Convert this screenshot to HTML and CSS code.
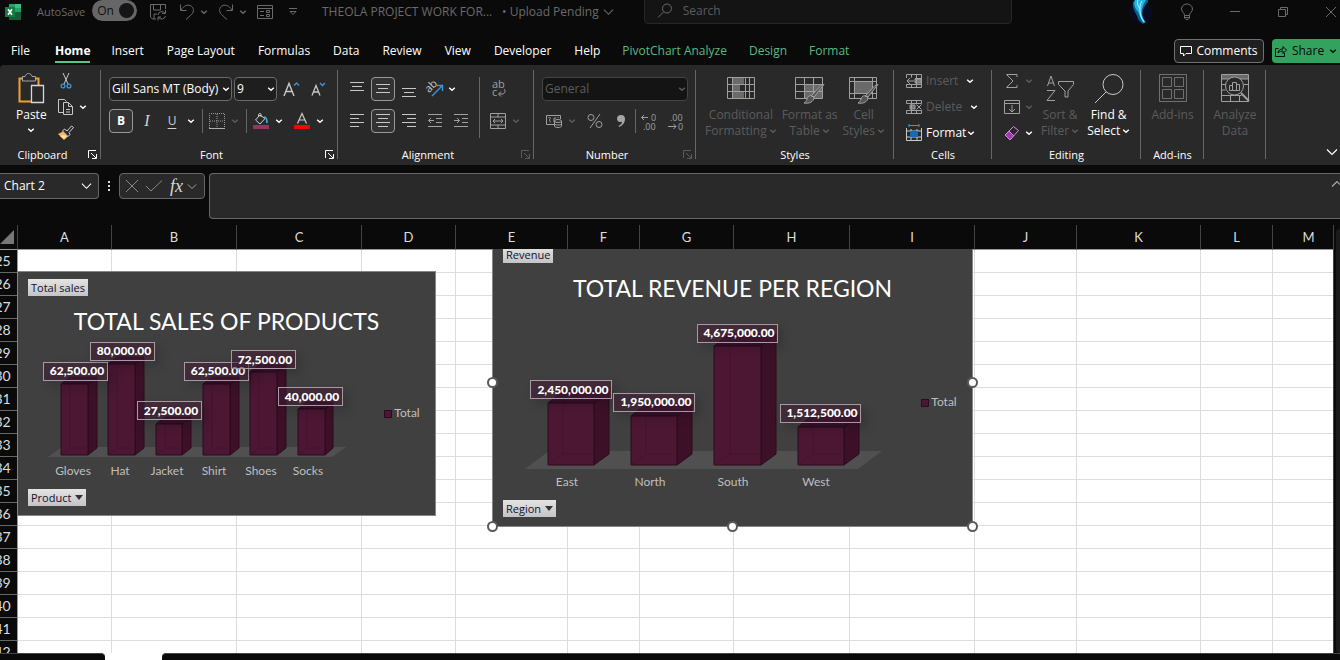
FILE: index.html
```
<!DOCTYPE html>
<html lang="en">
<head>
<meta charset="utf-8">
<title>THEOLA PROJECT WORK FOR... - Excel</title>
<link rel="stylesheet" href="styles.css">
</head>
<body>
<svg class="defs" aria-hidden="true">
  <symbol id="chev" viewBox="0 0 8 8"><path d="M1.2 2.8 4 5.2 6.8 2.8" fill="none" stroke="currentColor" stroke-width="1.5"/></symbol>
  <symbol id="chev-lg" viewBox="0 0 12 8"><path d="M1 1.5 6 6.5 11 1.5" fill="none" stroke="currentColor" stroke-width="1.2"/></symbol>
  <symbol id="launch" viewBox="0 0 9 9"><path d="M.5 8V.5H8M3 3l5 5M8.500 4v4.500H4" fill="none" stroke="currentColor"/></symbol>
</svg>

<header class="titlebar">
  <svg class="logo" viewBox="0 0 16 16" width="16" height="16"><path fill="#21a366" d="M4 0h12v8H4z"/><path fill="#33c481" d="M10 0h6v4h-6z"/><path fill="#107c41" d="M4 8h6v4H4z"/><path fill="#185c37" d="M4 11h12v5H4zM10 8h6v4h-6z"/><path fill="#107c41" d="M0 3h10v10H0z"/><path stroke="#fff" stroke-width="1.6" d="m3 5.300 4 5.400M7 5.300l-4 5.400"/></svg>
  <span class="autosave">AutoSave</span>
  <button class="toggle" role="switch" aria-checked="true">On<i></i></button>
  <button class="qa save" aria-label="Save"><svg viewBox="0 0 18 18" width="18" height="18"><path d="M16.500 6V1.500h-15V14l2 2H7M4.500 2v5h7V2M5 16v-5h3M9 12a4 4 0 0 1 7-2M16.500 7v3.500H13M16.500 13a4 4 0 0 1-7 1.500M9 17.500V14h3"/></svg></button>
  <button class="qa undo" aria-label="Undo"><svg viewBox="0 0 18 18" width="18" height="18"><path d="M2.500 1.500v6h6M3 7C6 2.500 9.500 1.500 12 2.500c4 1.500 4.500 6 1.500 9L8 16.500"/></svg></button>
  <svg class="c8"><use href="#chev"/></svg>
  <button class="qa redo" aria-label="Redo"><svg viewBox="0 0 18 18" width="18" height="18"><path d="M15.500 1.500v6h-6M15 7C12 2.500 8.500 1.500 6 2.500c-4 1.500-4.500 6-1.500 9l5.500 5"/></svg></button>
  <svg class="c8"><use href="#chev"/></svg>
  <button class="qa form" aria-label="Form"><svg viewBox="0 0 18 16" width="18" height="16"><path d="M1.500 1.500h15v13h-15zM1.500 4.500h15M4 7.500h4M4 11.500h4M10.500 6.500h3v2h-3zM10.500 10.500h3v2h-3z"/></svg></button>
  <button class="qa more" aria-label="Customize"><svg viewBox="0 0 8 8" width="8" height="8"><path d="M0 .5h8M1 3.500h6L4 6.500z"/></svg></button>
  <span class="doc">THEOLA PROJECT WORK FOR...</span>
  <button class="status">• Upload Pending <svg width="11" height="8"><use href="#chev-lg"/></svg></button>
  <label class="search"><svg viewBox="0 0 16 16" width="16" height="16"><circle cx="10" cy="5.500" r="4.500"/><path d="M6.500 9 1 14.500"/></svg><input type="text" placeholder="Search" aria-label="Search"></label>
  <div class="window">
    <svg class="avatar" viewBox="0 0 24 24" width="24" height="24"><circle cx="12" cy="12" r="11.500" fill="#080b22"/><path fill="#0b5f88" d="M4 2C3 7 6 12 8 16c1 4 3 6 6 8l3-2c-4-4-4-8-3-12 1-3 3-6 5-8V0H6z"/><path fill="#25b6e6" d="M6 0C4 4 6 8 9 12c2 3 2 7 6 11l1-1c-3-5-4-9-3-13 1-3 2-6 4-9z"/><path d="M9 0c-2 4 1 6 2 10 0 4 1 8 4 12M13 1c-2 3-2 5-2 8" stroke="#b5f2ff" fill="none"/></svg>
    <button aria-label="Tips"><svg viewBox="0 0 14 18" width="14" height="18"><path d="M4.500 12.500C4.500 9.500 1.500 9 1.500 6a5.500 5 0 0 1 11 0c0 3-3 3.500-3 6.500zM4.500 12.500V15l1.500 1.500h2L9.500 15v-2.500M5 14.500h4"/></svg></button>
    <button aria-label="Minimize"><svg viewBox="0 0 10 10" width="10" height="10"><path d="M0 4.500h10"/></svg></button>
    <button aria-label="Restore"><svg viewBox="0 0 10 10" width="10" height="10"><path d="M.5 2.500h7v7h-7zM2.500 2V.5h7v7H8"/></svg></button>
    <button aria-label="Close"><svg viewBox="0 0 10 10" width="10" height="10"><path d="m0 0 10 10M10 0 0 10"/></svg></button>
  </div>
</header>

<nav class="tabs">
  <a href="#">File</a><a href="#" class="active">Home</a><a href="#">Insert</a><a href="#">Page Layout</a><a href="#">Formulas</a><a href="#">Data</a><a href="#">Review</a><a href="#">View</a><a href="#">Developer</a><a href="#">Help</a><a href="#" class="ctx">PivotChart Analyze</a><a href="#" class="ctx">Design</a><a href="#" class="ctx">Format</a>
  <div class="tab-actions">
    <button class="comments"><svg viewBox="0 0 12 12" width="12" height="12"><path d="M.5 1.500h11v7H6L3.500 11V8.500h-3z" fill="none" stroke="currentColor"/></svg>Comments</button>
    <button class="share"><svg viewBox="0 0 12 12" width="12" height="12"><path d="M3.500 3.500h-3v8h9V8M3 8c.5-3 2-4 5-4V1.500L11.500 5 8 8.500V6C6 6 4.500 6.500 3 8z" fill="none" stroke="currentColor"/></svg>Share<svg class="c8"><use href="#chev"/></svg></button>
  </div>
</nav>

<main class="ribbon">
  <section class="group clipboard">
    <div class="body">
      <button class="big paste"><svg viewBox="0 0 28 32" width="28" height="32"><path d="M7 5.500H2.500v23H14M18 5.500h3.500V12" fill="none" style="stroke:#f0a030" stroke-width="2"/><path d="M5.500 8V3.500H8c1-4 6-4 7 0h3.500V8z" fill="#292929" stroke="#a6a6a6"/><path d="M14.500 12.500h12v17h-12z" style="fill:#292929;stroke:#d8d8d8" stroke-width="1.300"/></svg><span>Paste</span><svg class="c8"><use href="#chev"/></svg></button>
      <div class="stack">
        <button aria-label="Cut"><svg viewBox="0 0 12 16" width="12" height="16"><path d="M3 0l5 11M9 0 4 11" stroke="#c8c8c8" fill="none"/><g fill="none" stroke="#3a96dd" stroke-width="1.300"><circle cx="3" cy="13" r="1.900"/><circle cx="9" cy="13" r="1.900"/></g></svg></button><i></i>
        <button aria-label="Copy"><svg viewBox="0 0 18 16" width="18" height="16"><path d="M6 13.500H1.500V.5h6l2 2M6.500 3.500h5l4 4v8h-9zM11.500 4v3.500h4M9 10.500h4M9 13h4" fill="none" stroke="#c8c8c8"/></svg></button><svg class="c8"><use href="#chev"/></svg>
        <button aria-label="Format Painter"><svg viewBox="0 0 16 16" width="16" height="16"><path d="M5 6.500 0 9l6 6 4.500-4z" style="fill:#f4b860;stroke:none"/><path d="m2 11 4 3 3-3-4-1z" style="fill:#ffe0a0;stroke:none"/><path d="m4.500 6 2-2 2.500 2L13.500 1l2 1.500L11 7.500l1 2-2 2z" fill="#292929" stroke="#d0d0d0"/></svg></button>
      </div>
    </div>
    <footer>Clipboard<svg class="launch"><use href="#launch"/></svg></footer>
  </section>

  <section class="group font">
    <div class="body col">
      <div class="row fr1">
        <label class="pick"><select aria-label="Font"><option>Gill Sans MT (Body)</option></select><svg class="c8"><use href="#chev"/></svg></label>
        <label class="pick"><select aria-label="Font size"><option>9</option></select><svg class="c8"><use href="#chev"/></svg></label>
        <button aria-label="Increase font size"><svg viewBox="0 0 16 16" width="16" height="16"><path d="m1 15 5-12.500L11 15M2.800 10.500h6.400" stroke="#c8c8c8" stroke-width="1.400" fill="none"/><path d="M11 4.500 13.500 2 16 4.500" fill="none" stroke-width="1.300" style="stroke:#3a96dd"/></svg></button>
        <button aria-label="Decrease font size"><svg viewBox="0 0 16 16" width="16" height="16"><path d="m2 14.500 4-10 4 10M3.500 11h5" stroke="#c8c8c8" stroke-width="1.300" fill="none"/><path d="M10 2 12.500 4.500 15 2" fill="none" stroke-width="1.300" style="stroke:#3a96dd"/></svg></button>
      </div>
      <div class="row fr2">
        <button class="on"><b>B</b></button><button class="it">I</button><button class="un">U</button><svg class="c8"><use href="#chev"/></svg><hr>
        <button aria-label="Borders"><svg viewBox="0 0 16 16" width="16" height="16"><path d="M.5 15V.5h15V15M8 1v14M1 8h14" fill="none" stroke="#999" stroke-dasharray="1 1"/><path d="M0 15.500h16" stroke="#b0b0b0"/></svg></button><svg class="c8 off"><use href="#chev"/></svg><hr>
        <button aria-label="Fill colour"><svg viewBox="0 0 16 16" width="16" height="16"><path style="fill:#993366;stroke:none" d="M0 12h16v4H0z"/><path d="M7 2 2.500 7l4.500 4 5-5.500zM5.500 4V1.500C6 .2 8 .2 8 1.500V4" fill="none" stroke="#d0d0d0"/><path d="M11 4c2.500 0 3 2 3 6" stroke="#5aa6dd" stroke-width="1.600" fill="none"/></svg></button><svg class="c8"><use href="#chev"/></svg>
        <button aria-label="Font colour"><svg viewBox="0 0 16 16" width="16" height="16"><path style="fill:#f00;stroke:none" d="M0 12h16v4H0z"/><path d="m3.500 10.500 4.500-10 4.500 10M5 7h6" stroke="#c8c8c8" stroke-width="1.200" fill="none"/></svg></button><svg class="c8"><use href="#chev"/></svg>
      </div>
    </div>
    <footer>Font<svg class="launch"><use href="#launch"/></svg></footer>
  </section>

  <section class="group align">
    <div class="body">
      <div class="ag">
        <button aria-label="Top align"><svg viewBox="0 0 14 14" width="14" height="14"><path d="M0 .5h14M2 4.500h10M0 8.500h14"/></svg></button>
        <button class="on" aria-label="Middle align"><svg viewBox="0 0 14 14" width="14" height="14"><path d="M0 2.500h14M2 6.500h10M0 10.500h14"/></svg></button>
        <button aria-label="Bottom align"><svg viewBox="0 0 14 14" width="14" height="14"><path d="M0 6.500h14M2 10.500h10M0 14.500h14"/></svg></button>
        <button aria-label="Orientation"><svg viewBox="0 0 16 16" width="16" height="16"><text x="-2" y="9" transform="rotate(-45 4 6)" class="ab">ab</text><path d="M5 15 15 5M10 4.500h5.500V10" style="stroke:#3a96dd;stroke-width:1.400"/></svg></button>
        <svg class="c8 tight"><use href="#chev"/></svg>
        <button aria-label="Align left"><svg viewBox="0 0 14 14" width="14" height="14"><path d="M0 .5h14M0 4.500h9M0 8.500h14M0 12.500h9"/></svg></button>
        <button class="on" aria-label="Center"><svg viewBox="0 0 14 14" width="14" height="14"><path d="M0 .5h14M2 4.500h10M0 8.500h14M2 12.500h10"/></svg></button>
        <button aria-label="Align right"><svg viewBox="0 0 14 14" width="14" height="14"><path d="M0 .5h14M5 4.500h9M0 8.500h14M5 12.500h9"/></svg></button>
        <button class="dim" aria-label="Decrease indent"><svg viewBox="0 0 14 14" width="14" height="14"><path d="M0 .5h14M8 4.500h6M8 8.500h6M0 12.500h14M6 6.500H.5M3 4 .5 6.500 3 9"/></svg></button>
        <button class="dim" aria-label="Increase indent"><svg viewBox="0 0 14 14" width="14" height="14"><path d="M0 .5h14M8 4.500h6M8 8.500h6M0 12.500h14M0 6.500h5.500M3 4l2.500 2.500L3 9"/></svg></button>
      </div>
      <hr class="tall">
      <div class="ag2">
        <button class="dim" aria-label="Wrap text"><svg viewBox="0 0 16 18" width="16" height="18"><text x="2" y="8" class="ab">ab</text><text x="2" y="16" class="ab">c</text><path d="M14 9c2 2 1 5-2 5H9M11 11.500 8.500 14l2.500 2.500"/></svg></button><i></i>
        <button class="dim" aria-label="Merge"><svg viewBox="0 0 16 16" width="16" height="16"><path d="M.5 .5h15v15H.5zM.5 4h15M.5 12h15M8 0v4M8 12v4M3 8h10M5 6 3 8l2 2M11 6l2 2-2 2"/></svg></button><svg class="c8 off"><use href="#chev"/></svg>
      </div>
    </div>
    <footer>Alignment<svg class="launch off"><use href="#launch"/></svg></footer>
  </section>

  <section class="group number">
    <div class="body col">
      <label class="pick disabled"><select aria-label="Number format" disabled><option>General</option></select><svg class="c8"><use href="#chev"/></svg></label>
      <div class="row nr2 dim">
        <button aria-label="Accounting"><svg viewBox="0 0 16 14" width="16" height="14"><path d="M8 10.500H.5v-9h14V5M5 4C3 4 3 8 5 8M10 4H8v4M3 3v1M12 3v1"/><ellipse cx="12" cy="7" rx="3.500" ry="1.500"/><path d="M8.500 7v5c0 2 7 2 7 0V7M8.500 9.500c0 2 7 2 7 0"/></svg></button><svg class="c8 off"><use href="#chev"/></svg>
        <button aria-label="Percent"><svg viewBox="0 0 16 16" width="16" height="16"><circle cx="4" cy="4.500" r="3"/><circle cx="12" cy="11.500" r="3"/><path d="M13 1 3 15"/></svg></button>
        <button aria-label="Comma"><svg viewBox="0 0 10 14" width="10" height="14"><path d="M5 1c3 0 4 2 4 4 0 4-3 7-6 8l-.5-1C5 11 6 9 6 7.500 3 9 1 7 1 4.500 1 2 3 1 5 1z" style="fill:#a6a6a6;stroke:none"/></svg></button><hr>
        <button aria-label="Increase decimal"><svg viewBox="0 0 16 17" width="16" height="17"><path d="M7 4.500H.5M3 2 .5 4.500 3 7"/><text x="10" y="8" class="dec">0</text><text x="2" y="17" class="dec">.00</text></svg></button>
        <button aria-label="Decrease decimal"><svg viewBox="0 0 16 17" width="16" height="17"><text x="2" y="8" class="dec">.00</text><text x="10" y="17" class="dec">0</text><path d="M0 13.500h8M5.500 11 8 13.500 5.500 16"/></svg></button>
      </div>
    </div>
    <footer>Number<svg class="launch off"><use href="#launch"/></svg></footer>
  </section>

  <section class="group styles">
    <div class="body dim">
      <button class="big"><svg viewBox="0 0 30 32" width="30" height="32"><path d="M6 4h12v7h-4v7h4v7H6z" style="fill:#6a6a6a;stroke:none"/><path d="M1.500 4.500h27v21h-27zM1.500 11.500h27M1.500 18.500h27M6.500 4v22M19.500 4v22M23.500 4v22"/></svg><span>Conditional<br>Formatting<svg class="c8"><use href="#chev"/></svg></span></button>
      <button class="big"><svg viewBox="0 0 30 32" width="30" height="32"><path d="M10 11h17v14H10z" style="fill:#6a6a6a;stroke:none"/><path d="M.5 4.500h27v21H.5zM0 11.500h28M0 18.500h28M9.500 4v22M18.500 4v22"/><path d="M29 11.500 19 24l-3-1L26 12.500zM19 24c0 5-5 7-10 6 2-1 2-2 3-4 1-3 3-4 5-3z" style="fill:#555"/></svg><span>Format as<br>Table<svg class="c8"><use href="#chev"/></svg></span></button>
      <button class="big"><svg viewBox="0 0 30 32" width="30" height="32"><path d="M6 9h17v11H6z" style="fill:#6a6a6a;stroke:none"/><path d="M.5 4.500h27v21H.5zM0 8.500h28M0 20.500h28M5.500 4v22M23.500 4v22"/><path d="M29 11.500 19 24l-3-1L26 12.500zM19 24c0 5-5 7-10 6 2-1 2-2 3-4 1-3 3-4 5-3z" style="fill:#555"/></svg><span>Cell<br>Styles<svg class="c8"><use href="#chev"/></svg></span></button>
    </div>
    <footer>Styles</footer>
  </section>

  <section class="group cells">
    <div class="body list">
      <button class="dim"><svg viewBox="0 0 16 16" width="16" height="16"><path d="M9 6h6v4H9z" style="fill:#777"/><path d="M.5 5V1.500h15v13H.5V11M5.500 1.500v3M10.500 1v14M.5 11.500h15M5.500 11v3M8 8H1M4 5 1 8l3 3M9 5.500h6"/></svg><span>Insert</span><svg class="c8 lit"><use href="#chev"/></svg></button>
      <button class="dim"><svg viewBox="0 0 16 16" width="16" height="16"><path d="M4 6h5v4H4z" style="fill:#777"/><path d="M.5 4.500v-3h15v3H.5M.5 14.500v-3h15v3zM5.500 1.500v13M10.500 1.500v3M10.500 11.500v3M10.500 5.500l5 5M15.500 5.500l-5 5"/></svg><span>Delete</span><svg class="c8 lit"><use href="#chev"/></svg></button>
      <button class="fmt"><svg viewBox="0 0 16 16" width="16" height="16"><path d="M.5 3v12.500h15V3M.5 6h15M.5 12h15M5 4v11.500M11 4v11.500" style="stroke:#c8c8c8"/><path d="M4 6h8v6H4z" style="fill:#0f6cbd;stroke:none"/><path d="M3 .5h10M3-1v3M13-1v3" style="stroke:#3a96dd"/></svg><span>Format</span><svg class="c8 lit"><use href="#chev"/></svg></button>
    </div>
    <footer>Cells</footer>
  </section>

  <section class="group editing">
    <div class="body">
      <div class="list small">
        <button class="dim" aria-label="Sum"><svg viewBox="0 0 16 16" width="16" height="16"><path d="M13 4V1.500H2.500L9 8l-6.500 6.500H13V12"/></svg><svg class="c8 off"><use href="#chev"/></svg></button>
        <button class="dim" aria-label="Fill"><svg viewBox="0 0 16 14" width="16" height="14"><path d="M.5 .5h15v13H.5zM.5 3.500h15M8 5v7M5 9l3 3 3-3"/></svg><svg class="c8 off"><use href="#chev"/></svg></button>
        <button aria-label="Clear"><svg viewBox="0 0 16 16" width="16" height="16"><path d="m1 10 4-4 5 5-4 4z" style="fill:#a03cb0;stroke:none"/><path d="m1 10 8.500-8.500 5 4L6 15zM5 6l5 5" style="stroke:#d68ae0"/></svg><svg class="c8"><use href="#chev"/></svg></button>
      </div>
      <button class="big dim"><svg viewBox="0 0 30 32" width="30" height="32"><path d="M2.500 13 6 3l3.500 10M3.500 10h5M2 17.500h8L2 27.500h8M13.500 8.500h15v3L23 18v6h-3v-6l-6.500-6.500z"/></svg><span>Sort &amp;<br>Filter<svg class="c8"><use href="#chev"/></svg></span></button>
      <button class="big"><svg viewBox="0 0 30 32" width="30" height="32"><circle cx="19" cy="11.500" r="10"/><path d="M12 19 1 30"/></svg><span>Find &amp;<br>Select<svg class="c8"><use href="#chev"/></svg></span></button>
    </div>
    <footer>Editing</footer>
  </section>

  <section class="group addins">
    <div class="body dim faint"><button class="big"><svg viewBox="0 0 30 32" width="30" height="32"><path d="M1.500 1.500h27v27h-27zM4.500 4.500h9v9h-9zM16.500 4.500h9v9h-9zM4.500 16.500h9v9h-9zM16.500 16.500h9v9h-9z"/></svg><span>Add-ins</span></button></div>
    <footer>Add-ins</footer>
  </section>

  <section class="group analyze">
    <div class="body dim"><button class="big"><svg viewBox="0 0 30 32" width="30" height="32"><path d="M2 2h27v4H2z" style="fill:#6a6a6a;stroke:none"/><path d="M1.500 1.500h27v27h-27zM1.500 6h27M1.500 11.500h5M24 11.500h4M1.500 17h4M1.500 22.500h20M10.500 22v6M19.500 22v6"/><circle cx="14.500" cy="13" r="9" style="fill:#292929"/><path d="m21 20 8 8" style="stroke-width:2"/><path d="M9.500 17.500v-5h3v5zM12.500 17.500v-8h4v8zM16.500 17.500v-6h3v6z"/></svg><span>Analyze<br>Data</span></button></div>
  </section>
  <button class="collapse" aria-label="Collapse ribbon"><svg width="12" height="8"><use href="#chev-lg"/></svg></button>
</main>

<section class="formula">
  <div class="namebox"><input type="text" value="Chart 2" aria-label="Name box"><svg width="11" height="8"><use href="#chev-lg"/></svg></div>
  <div class="dots"><i></i><i></i><i></i></div>
  <div class="fx">
    <button aria-label="Cancel"><svg viewBox="0 0 12 12" width="12" height="12"><path d="m0 0 12 12M12 0 0 12"/></svg></button>
    <button aria-label="Enter"><svg viewBox="0 0 16 12" width="16" height="12"><path d="m0 6 5 5L16 .5"/></svg></button>
    <button class="fn">fx</button><svg width="10" height="7"><use href="#chev-lg"/></svg>
  </div>
  <div class="bar"><input type="text" aria-label="Formula bar"><svg width="12" height="8"><use href="#chev-lg"/></svg></div>
</section>

<section class="sheet">
  <table>
    <colgroup><col class="w-h"><col class="w94"><col class="w125"><col class="w125"><col class="w94"><col class="w112"><col class="w72"><col class="w94"><col class="w116"><col class="w125"><col class="w102"><col class="w124"><col class="w72"><col class="w72"></colgroup>
    <thead><tr><th><svg viewBox="0 0 14 14" width="14" height="14"><path d="M14 0v14H0z" fill="#777"/></svg></th><th>A</th><th>B</th><th>C</th><th>D</th><th>E</th><th>F</th><th>G</th><th>H</th><th>I</th><th>J</th><th>K</th><th>L</th><th>M</th></tr></thead>
    <tbody>
      <tr><th>25</th><td><td><td><td><td><td><td><td><td><td><td><td><td></tr>
      <tr><th>26</th><td><td><td><td><td><td><td><td><td><td><td><td><td></tr>
      <tr><th>27</th><td><td><td><td><td><td><td><td><td><td><td><td><td></tr>
      <tr><th>28</th><td><td><td><td><td><td><td><td><td><td><td><td><td></tr>
      <tr><th>29</th><td><td><td><td><td><td><td><td><td><td><td><td><td></tr>
      <tr><th>30</th><td><td><td><td><td><td><td><td><td><td><td><td><td></tr>
      <tr><th>31</th><td><td><td><td><td><td><td><td><td><td><td><td><td></tr>
      <tr><th>32</th><td><td><td><td><td><td><td><td><td><td><td><td><td></tr>
      <tr><th>33</th><td><td><td><td><td><td><td><td><td><td><td><td><td></tr>
      <tr><th>34</th><td><td><td><td><td><td><td><td><td><td><td><td><td></tr>
      <tr><th>35</th><td><td><td><td><td><td><td><td><td><td><td><td><td></tr>
      <tr><th>36</th><td><td><td><td><td><td><td><td><td><td><td><td><td></tr>
      <tr><th>37</th><td><td><td><td><td><td><td><td><td><td><td><td><td></tr>
      <tr><th>38</th><td><td><td><td><td><td><td><td><td><td><td><td><td></tr>
      <tr><th>39</th><td><td><td><td><td><td><td><td><td><td><td><td><td></tr>
      <tr><th>40</th><td><td><td><td><td><td><td><td><td><td><td><td><td></tr>
      <tr><th>41</th><td><td><td><td><td><td><td><td><td><td><td><td><td></tr>
      <tr><th>42</th><td><td><td><td><td><td><td><td><td><td><td><td><td></tr>
    </tbody>
  </table>
  <div class="vscroll"><i></i></div>

  <figure class="chart sales">
    <button class="field">Total sales</button>
    <h2>TOTAL SALES OF PRODUCTS</h2>
    <svg class="plot" viewBox="18 340 418 145" width="418" height="145">
      <path class="floor" d="M48 457h284l14-10H62z"/>
      <g class="bar3d">
        <path class="side" d="m88 384 9-7v71l-9 7z"/><path class="top" d="m61 384 9-7h27l-9 7z"/><path class="front" d="M61 384h27v71H61z"/><path class="edge" d="M70 385v63h18M70 448l-9 7"/>
        <path class="side" d="m135 364 9-7v91l-9 7z"/><path class="top" d="m108 364 9-7h27l-9 7z"/><path class="front" d="M108 364h27v91h-27z"/><path class="edge" d="M117 365v83h18M117 448l-9 7"/>
        <path class="side" d="m182 424 9-7v31l-9 7z"/><path class="top" d="m156 424 9-7h26l-9 7z"/><path class="front" d="M156 424h26v31h-26z"/><path class="edge" d="M165 425v23h17M165 448l-9 7"/>
        <path class="side" d="m230 384 9-7v71l-9 7z"/><path class="top" d="m203 384 9-7h27l-9 7z"/><path class="front" d="M203 384h27v71h-27z"/><path class="edge" d="M212 385v63h18M212 448l-9 7"/>
        <path class="side" d="m277 372 9-7v83l-9 7z"/><path class="top" d="m250 372 9-7h27l-9 7z"/><path class="front" d="M250 372h27v83h-27z"/><path class="edge" d="M259 373v75h18M259 448l-9 7"/>
        <path class="side" d="m325 409 8-7v46l-8 7z"/><path class="top" d="m298 409 9-7h26l-8 7z"/><path class="front" d="M298 409h27v46h-27z"/><path class="edge" d="M307 410v38h18M307 448l-9 7"/>
      </g>
      <g class="tag"><rect x="43.500" y="362.500" width="64" height="18"/><text x="77" y="375">62,500.00</text></g>
      <g class="tag"><rect x="90.500" y="342.500" width="64" height="18"/><text x="124" y="355">80,000.00</text></g>
      <g class="tag"><rect x="137.500" y="401.500" width="64" height="18"/><text x="171" y="415">27,500.00</text></g>
      <g class="tag"><rect x="184.500" y="362.500" width="64" height="18"/><text x="218" y="375">62,500.00</text></g>
      <g class="tag"><rect x="231.500" y="350.500" width="64" height="18"/><text x="265" y="364">72,500.00</text></g>
      <g class="tag"><rect x="278.500" y="387.500" width="64" height="18"/><text x="312" y="401">40,000.00</text></g>
      <g class="cat"><text x="73" y="475">Gloves</text><text x="120" y="475">Hat</text><text x="167" y="475">Jacket</text><text x="214" y="475">Shirt</text><text x="261" y="475">Shoes</text><text x="308" y="475">Socks</text><text x="407" y="417">Total</text></g>
      <path class="key" d="M384.500 410.500h7v7h-7z"/>
    </svg>
    <button class="field">Product <i></i></button>
  </figure>

  <figure class="chart revenue">
    <button class="field">Revenue</button>
    <h2>TOTAL REVENUE PER REGION</h2>
    <svg class="plot" viewBox="493 320 480 175" width="480" height="175">
      <path class="floor" d="M525 469h333l24-18H549z"/>
      <g class="bar3d">
        <path class="side" d="m594 403 15-12v63l-15 11z"/><path class="top" d="m548 403 15-12h46l-15 12z"/><path class="front" d="M548 403h46v62h-46z"/><path class="edge" d="M563 404v50h31M563 454l-15 11"/>
        <path class="side" d="m677 416 15-12v50l-15 11z"/><path class="top" d="m631 416 15-12h46l-15 12z"/><path class="front" d="M631 416h46v49h-46z"/><path class="edge" d="M646 417v37h31M646 454l-15 11"/>
        <path class="side" d="m761 346 15-12v120l-15 11z"/><path class="top" d="m714 346 15-12h47l-15 12z"/><path class="front" d="M714 346h47v119h-47z"/><path class="edge" d="M730 347v107h31M730 454l-16 11"/>
        <path class="side" d="m844 427 15-12v39l-15 11z"/><path class="top" d="m798 427 15-12h46l-15 12z"/><path class="front" d="M798 427h46v38h-46z"/><path class="edge" d="M813 428v26h31M813 454l-15 11"/>
      </g>
      <g class="tag"><rect x="530.500" y="380.500" width="81" height="18"/><text x="573" y="394">2,450,000.00</text></g>
      <g class="tag"><rect x="613.500" y="393.500" width="81" height="18"/><text x="656" y="406">1,950,000.00</text></g>
      <g class="tag"><rect x="697.500" y="324.500" width="80" height="18"/><text x="739" y="337">4,675,000.00</text></g>
      <g class="tag"><rect x="780.500" y="404.500" width="80" height="18"/><text x="822" y="417">1,512,500.00</text></g>
      <g class="cat"><text x="567" y="486">East</text><text x="650" y="486">North</text><text x="733" y="486">South</text><text x="816" y="486">West</text><text x="944" y="406">Total</text></g>
      <path class="key" d="M921.500 399.500h7v7h-7z"/>
    </svg>
    <button class="field">Region <i></i></button>
    <i class="handle ml"></i><i class="handle mr"></i><i class="handle bl"></i><i class="handle bc"></i><i class="handle br"></i>
  </figure>
</section>

<footer class="sheetbar"><div class="left"></div><div class="right"></div></footer>
</body>
</html>
```
FILE: styles.css
```
* { box-sizing: border-box; }
body { margin: 0; height: 100vh; display: flex; flex-direction: column; overflow: hidden; background: #0a0a0a; color: #fff; font: 12px/16px "Open Sans", "Noto Sans", sans-serif; }
button { padding: 0; border: 0; background: none; color: inherit; font: inherit; display: flex; align-items: center; justify-content: center; }
input, select { font: inherit; color: inherit; background: none; border: 0; outline: 0; min-width: 0; }
a { color: inherit; text-decoration: none; }
svg { flex: none; overflow: visible; }
.defs { position: absolute; width: 0; height: 0; }
.c8 { width: 8px; height: 8px; }
.off { color: #5c5c5c; }

.titlebar { height: 27px; flex: none; display: flex; align-items: center; padding: 0 4px 4px 5px; color: #6a6a6a; white-space: nowrap; }
.titlebar button svg, .search svg { fill: none; stroke: #6a6a6a; }
.titlebar .status svg { stroke: none; }
.autosave { width: 55px; margin-left: 16px; font-size: 11px; }
.toggle { width: 45px; height: 21px; border-radius: 11px; background: #666; color: #111; gap: 5px; padding-left: 2px; margin-bottom: 2px; }
.toggle i { width: 15px; height: 15px; border-radius: 50%; background: #151515; }
.qa { width: 18px; }
.save { margin: 0 12px; }
.undo, .redo { margin-right: 4px; }
.undo { margin-left: -1px; }
.redo { margin-left: 9px; }
.form { margin: 0 15px 0 9px; }
.more { width: 8px; }
.doc { width: 172px; margin-left: 25px; }
.status { margin-left: 8px; gap: 4px; }
.search { display: flex; align-items: center; gap: 8px; flex: 0 1 368px; height: 30px; margin: -5px 0 0 30px; padding: 4px 12px 0 12px; border: 1px solid #262626; border-radius: 4px; background: #141414; }
.search input { flex: 1; }
.search input::placeholder { color: #5c5c5c; opacity: 1; }
.window { margin-left: auto; display: flex; align-items: center; gap: 38px; }
.avatar { margin-right: -11px; }
.window button:nth-of-type(1) { margin-right: -2px; }

.tabs { height: 38px; flex: none; display: flex; align-items: center; gap: 23px; padding: 9px 0 0 11px; white-space: nowrap; }
.tabs > a { line-height: 20px; border-bottom: 2px solid transparent; padding-top: 2px; }
.tabs > .active { font-weight: 700; border-color: #5cc489; margin: 0 -2px 0 2px; }
.tabs > .ctx { color: #5cb980; margin-left: -1px; }
.tab-actions { margin-left: auto; display: flex; gap: 8px; }
.comments { width: 90px; height: 24px; gap: 4px; border: 1px solid #707070; border-radius: 4px; background: #1f1f1f; }
.share { width: 68px; height: 24px; gap: 5px; border-radius: 4px 0 0 4px; background: #32a35f; color: #0a0a0a; }

.ribbon { height: 100px; flex: none; display: flex; background: #292929; border-radius: 4px 0 0 0; position: relative; }
.group { display: flex; flex-direction: column; flex: none; position: relative; }
.group::after { content: ""; position: absolute; right: 0; top: 5px; bottom: 6px; width: 1px; background: #666; }
.group footer { height: 20px; display: flex; justify-content: center; align-items: center; font-size: 11px; }
.launch { width: 9px; height: 9px; position: absolute; right: 4px; bottom: 6px; }
.body { height: 80px; display: flex; }
.body button svg { fill: none; stroke: #c8c8c8; }
.body button .c8 { stroke: none; }
.dim { color: #5c5c5c; }
.body .dim svg, .body.dim svg { stroke: #a0a0a0; }
.body .dim .c8, .body.dim .c8 { stroke: none; }
.body.faint svg { stroke: #707070; }
.lit { color: #fff; }
.col { flex-direction: column; gap: 8px; padding-top: 12px; }
.row { display: grid; height: 24px; align-items: center; justify-items: center; justify-content: start; }
hr { width: 1px; height: 24px; margin: 0; border: 0; background: #666; }
.on { width: 24px; height: 24px; border: 1px solid #999; border-radius: 4px; background: #333; }
.big { flex-direction: column; justify-content: flex-start; padding-top: 8px; text-align: center; line-height: 16px; white-space: nowrap; }
.big > span { margin-top: 2px; }
.big span .c8 { margin-left: 2px; }
.pick { display: grid; width: 100%; align-items: center; }
.pick select { grid-area: 1 / 1; appearance: none; width: 100%; height: 24px; padding: 0 2px; border: 1px solid #6a6a6a; border-radius: 4px; background: #1e1e1e; }
.pick .c8 { grid-area: 1 / 1; justify-self: end; margin-right: 2px; pointer-events: none; }
.pick.disabled { color: #5c5c5c; }
.pick.disabled select { background: #141414; border-color: #444; opacity: 1; }

.clipboard { width: 101px; }
.clipboard .body { padding-left: 16px; }
.paste > .c8 { margin-top: 3px; }
.paste > span { margin-top: 2px; }
.stack { display: grid; grid-template: 26px 26px 26px / 22px 12px; justify-items: center; align-items: center; margin-left: 8px; padding-top: 3px; }
.clipboard .body button { min-width: 20px; }
.clipboard footer { padding-right: 16px; }

.font { width: 237px; }
.font .body { padding-left: 8px; }
.font footer { padding-right: 16px; }
.fr1 { grid-template-columns: 123px 43px 24px 26px; column-gap: 2px; }
.fr2 { grid-template-columns: 24px 28px 22px 16px 6px 24px 12px 10px 20px 16px 30px 6px; }
.it { font: italic 16px "Liberation Serif", serif; color: #d0d0d0; }
.un { text-decoration: underline; text-underline-offset: 3px; color: #d0d0d0; }

.align { width: 196px; }
.align .body { padding: 12px 0 0 6px; }
.align footer { padding-right: 16px; }
.ag { display: grid; grid-template: 24px 24px / repeat(5, 26px); row-gap: 8px; justify-items: center; align-items: center; }
.tight { justify-self: start; }
.tall { height: 61px; margin: 0 5px 0 5px; }
.ag2 { display: grid; grid-template: 24px 24px / 26px 10px; row-gap: 8px; justify-items: center; align-items: center; }
.body text { stroke: none; fill: currentColor; }
.ab { font-size: 11px; color: #c8c8c8; }
.dim .ab, .dec { color: #a0a0a0; }
.dec { font-size: 9px; }

.number { width: 162px; }
.number .body { padding: 12px 8px 0; }
.number footer { padding-right: 16px; }
.nr2 { grid-template-columns: 24px 12px 34px 18px 10px 18px 36px; }

.styles { width: 198px; }
.styles .body { justify-content: center; gap: 5px; }
.cells { width: 98px; }
.list { display: grid; grid-template-rows: 26px 26px 26px; padding: 3px 0 0 12px; }
.list button { justify-content: flex-start; gap: 4px; }
.cells .dim .c8 { margin-left: 4px; }
.fmt .c8 { margin-left: -3px; }
.editing { width: 149px; }
.list button .lit { color: #fff; }
.editing .body { gap: 8px; }
.small button { gap: 5px; }
.addins { width: 63px; }
.addins .body, .analyze .body { justify-content: center; }
.analyze { width: 62px; }
.collapse { position: absolute; right: 2px; bottom: 9px; }

.formula { height: 60px; flex: none; display: flex; align-items: flex-start; padding-top: 8px; }
.namebox, .fx, .bar { border: 1px solid #666; background: #292929; border-radius: 4px; display: flex; align-items: center; }
.namebox { width: 99px; height: 26px; border-left: 0; border-radius: 0 4px 4px 0; padding-right: 6px; }
.namebox input { flex: 1; padding: 0 4px; }
.dots { width: 20px; height: 26px; display: flex; flex-direction: column; gap: 2px; align-items: center; justify-content: center; }
.dots i { width: 2px; height: 2px; background: #ddd; }
.fx { width: 86px; height: 26px; padding: 0 2px 0 6px; gap: 8px; }
.fx button svg { stroke: #888; fill: none; }
.fn { font: italic 18px/20px "Liberation Serif", serif; color: #d8d8d8; }
.fx > svg { color: #a0a0a0; margin-left: -4px; }
.bar { flex: 1; height: 46px; margin-left: 4px; border-right: 0; border-radius: 4px 0 0 4px; align-items: flex-start; overflow: hidden; }
.bar input { flex: 1; }
.bar svg { transform: rotate(180deg); margin: 6px -3px 0 0; color: #aaa; }

.sheet { flex: 1; min-height: 0; position: relative; overflow: hidden; }
table { width: 1357px; margin-left: -12px; border-collapse: separate; border-spacing: 0; table-layout: fixed; background: #fff; }
.w-h { width: 30px; } .w94 { width: 94px; } .w125 { width: 125px; } .w112 { width: 112px; } .w72 { width: 72px; } .w116 { width: 116px; } .w102 { width: 102px; } .w124 { width: 124px; }
th, td { padding: 0; height: 23px; border-right: 1px solid #ddd; border-bottom: 1px solid #ddd; }
th { background: #0a0a0a; border-color: #666; font: 14px/18px Lato, "Open Sans", sans-serif; color: #ddd; }
thead th { height: 25px; border-bottom: 1px solid #999; border-right-color: #444; font-size: 13px; }
thead th svg { display: block; margin-left: 12px; }
tbody th { border-right-color: #999; }
.vscroll { position: absolute; right: 0; top: 0; bottom: 0; width: 7px; background: #0a0a0a; border-left: 1px solid #444; padding: 4px 0 0 2px; }
.vscroll i { display: block; height: 100%; background: #1a1a1a; border-radius: 4px 0 0 4px; }

.chart { position: absolute; margin: 0; background: #404040; border: 1px solid #868686; }
.chart h2 { margin: 0; text-align: center; font: 400 23px/30px Lato, sans-serif; white-space: nowrap; }
.sales { left: 17px; top: 46px; width: 419px; height: 245px; }
.revenue { left: 492px; top: 9px; width: 481px; height: 293px; clip-path: inset(15px -8px -8px -8px); }
.field { height: 17px; padding: 0 3px; background: linear-gradient(#e4e4e4, #c4c4c4); color: #101030; font: 11px/16px "Open Sans", sans-serif; gap: 4px; }
.field i { border: 4px solid transparent; border-top: 5px solid #333; border-bottom: 0; }
.chart .field { margin-left: 10px; }
.sales { padding-top: 7px; }
.sales h2 { margin-top: 10px; }
.sales .plot { margin-top: 4px; }
.sales .plot, .revenue .plot { display: block; }
.sales .plot + .field { margin-top: 4px; }
.revenue { padding-top: 11px; }
.revenue h2 { margin-top: 10px; }
.revenue .plot { margin-top: 17px; }
.revenue .plot + .field { margin-top: 5px; }
.floor { fill: #505050; }
.bar3d path { stroke: #2c0b1f; stroke-width: 1; }
.bar3d .front { fill: #4b1733; }
.bar3d .side { fill: #3c1128; }
.bar3d .top { fill: #37102a; }
.bar3d .edge { fill: none; stroke: #43142d; }
.tag rect { fill: #451a35; fill-opacity: .5; stroke: #a89aa4; filter: drop-shadow(5px 5px 4px #0004); }
.tag text { font: 900 12px Lato, sans-serif; fill: #fff; text-anchor: middle; }
.cat text { font: 12px Lato, sans-serif; fill: #bfbfbf; text-anchor: middle; }
.key { fill: #4b1733; stroke: #2c0b1f; }
.handle { position: absolute; width: 11px; height: 11px; border: 2px solid #5a5a5a; border-radius: 50%; background: #fff; }
.ml, .mr { top: 142px; }
.bl, .bc, .br { bottom: -6px; }
.ml, .bl { left: -6px; }
.mr, .br { right: -6px; }
.bc { left: calc(50% - 6px); }

.sheetbar { height: 7px; flex: none; display: flex; gap: 57px; background: #fff; }
.sheetbar div { background: #0a0a0a; border-top: 1px solid #444; }
.left { width: 105px; border-radius: 0 4px 0 0; }
.right { flex: 1; border-radius: 4px 0 0 0; }
```
